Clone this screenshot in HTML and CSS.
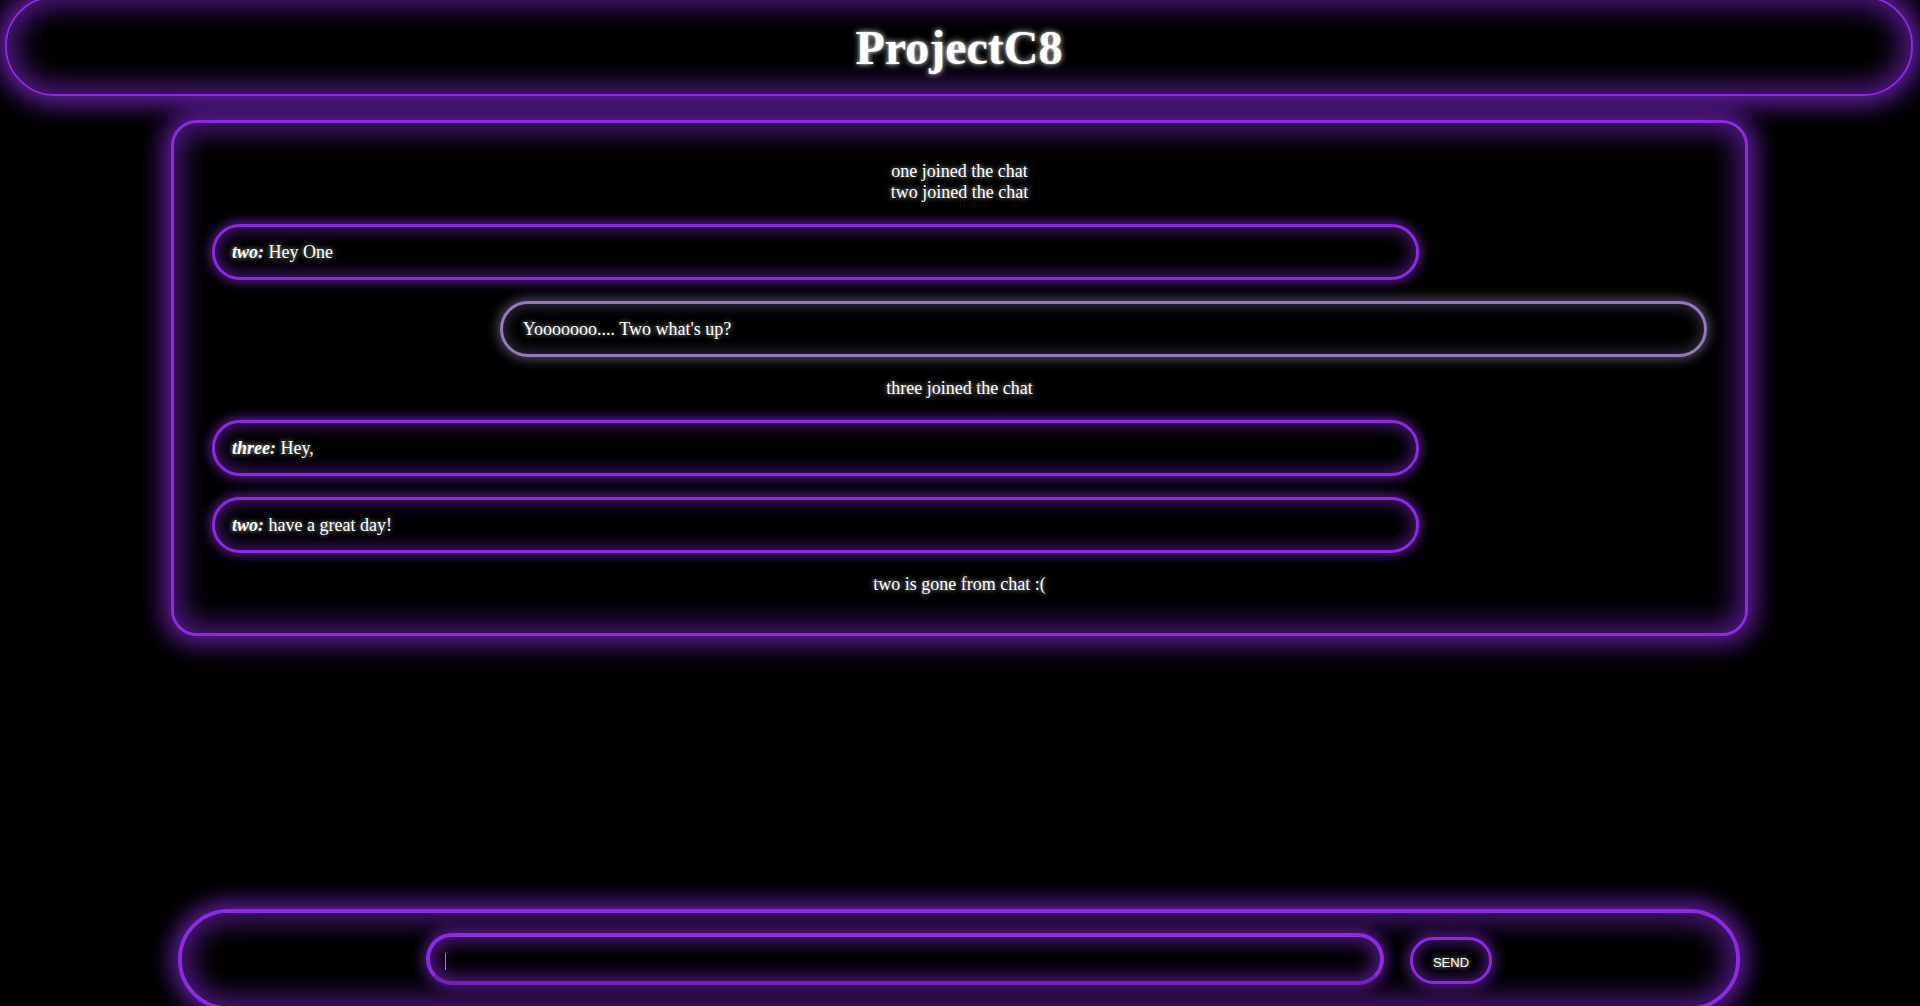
FILE: index.html
```html
<!DOCTYPE html>
<html lang="en">
<head>
<meta charset="utf-8">
<title>ProjectC8</title>
<link rel="stylesheet" href="styles.css">
</head>
<body>
  <header class="topbar">
    <h1 class="title">ProjectC8</h1>
  </header>

  <main class="chat">
    <div class="sys">one joined the chat</div>
    <div class="sys">two joined the chat</div>
    <div class="msg"><b class="who">two:</b> Hey One</div>
    <div class="msg msg-own">Yooooooo.... Two what's up?</div>
    <div class="sys">three joined the chat</div>
    <div class="msg"><b class="who">three:</b> Hey,</div>
    <div class="msg"><b class="who">two:</b> have a great day!</div>
    <div class="sys">two is gone from chat :(</div>
  </main>

  <footer class="composer">
    <div class="field">
      <input class="input" type="text" aria-label="message">
      <span class="caret"></span>
    </div>
    <button class="send" type="button">SEND</button>
  </footer>
</body>
</html>
```

FILE: styles.css
```css
html, body {
  margin: 0;
  padding: 0;
  height: 100%;
  overflow: hidden;
  background: #000;
}

body {
  display: flex;
  flex-direction: column;
  font-family: "Liberation Serif", "Times New Roman", serif;
  color: #fff;
}

.topbar {
  box-sizing: border-box;
  height: 100px;
  margin: -4px 7px 0 5px;
  padding-top: 22px;
  border: 2px solid #8a2be2;
  border-radius: 50px;
  background: #000;
  box-shadow: 0 0 24px 8px rgba(138, 43, 226, 0.75), inset 0 0 28px 7px rgba(138, 43, 226, 0.62);
  text-align: center;
}

.title {
  margin: 0;
  font-size: 48px;
  line-height: 56px;
  font-weight: bold;
  color: #fff;
  text-shadow: 0 0 6px rgba(255, 255, 255, 0.85), 0 0 2px rgba(255, 255, 255, 0.6);
}

.chat {
  box-sizing: border-box;
  margin: 24px 172px 0 171px;
  padding: 38px;
  border: 3px solid #8a2be2;
  border-radius: 26px;
  background: #000;
  box-shadow: 0 0 24px 8px rgba(138, 43, 226, 0.7), inset 0 0 28px 7px rgba(138, 43, 226, 0.58);
  font-size: 18px;
  line-height: 21px;
}

.sys {
  text-align: center;
  text-shadow: 0 0 5px rgba(255, 255, 255, 0.75);
}

.msg {
  box-sizing: border-box;
  width: 80.75%;
  margin: 21px 0;
  padding: 14.5px 17px;
  border: 3px solid #8a2be2;
  border-radius: 28px;
  background: #000;
  box-shadow: 0 0 12px 2px rgba(138, 43, 226, 0.65), inset 0 0 16px 3px rgba(138, 43, 226, 0.5);
  text-shadow: 0 0 5px rgba(255, 255, 255, 0.75);
}

.msg-own {
  margin-left: auto;
  padding-left: 20px;
  border-color: #9679b9;
  box-shadow: 0 0 12px 2px rgba(175, 150, 215, 0.5), inset 0 0 14px 2px rgba(175, 150, 215, 0.3);
}

.who {
  font-style: italic;
  font-weight: bold;
}

.composer {
  box-sizing: border-box;
  height: 101px;
  margin: auto 180px -4px 178px;
  border: 4px solid #8a2be2;
  border-radius: 52px;
  background: #000;
  box-shadow: 0 0 22px 7px rgba(138, 43, 226, 0.7), inset 0 0 28px 7px rgba(138, 43, 226, 0.58);
  display: flex;
  align-items: flex-start;
  justify-content: center;
  gap: 26px;
  padding-top: 20px;
}

.field {
  position: relative;
  width: 958px;
  height: 52px;
}

.input {
  box-sizing: border-box;
  width: 100%;
  height: 100%;
  margin: 0;
  padding: 0 15px;
  border: 4px solid #8a2be2;
  border-bottom-color: #6f24b8;
  border-radius: 26px;
  background: #000;
  color: #fff;
  outline: none;
  box-shadow: 0 0 14px 3px rgba(138, 43, 226, 0.6), inset 0 0 18px 5px rgba(138, 43, 226, 0.55);
  font-family: "Liberation Sans", Arial, sans-serif;
  font-size: 16px;
}

.caret {
  position: absolute;
  left: 19px;
  top: 20px;
  width: 1px;
  height: 17px;
  background: #8f8f9a;
}

.send {
  box-sizing: border-box;
  width: 82px;
  height: 47px;
  margin-top: 4px;
  padding: 3px 0 0;
  border: 3px solid #8a2be2;
  border-radius: 24px;
  background: #000;
  color: #fff;
  box-shadow: 0 0 14px 3px rgba(138, 43, 226, 0.6), inset 0 0 14px 3px rgba(138, 43, 226, 0.5);
  font-family: "Liberation Sans", Arial, sans-serif;
  font-size: 13px;
  text-shadow: 0 0 4px rgba(255, 255, 255, 0.8);
}
```
